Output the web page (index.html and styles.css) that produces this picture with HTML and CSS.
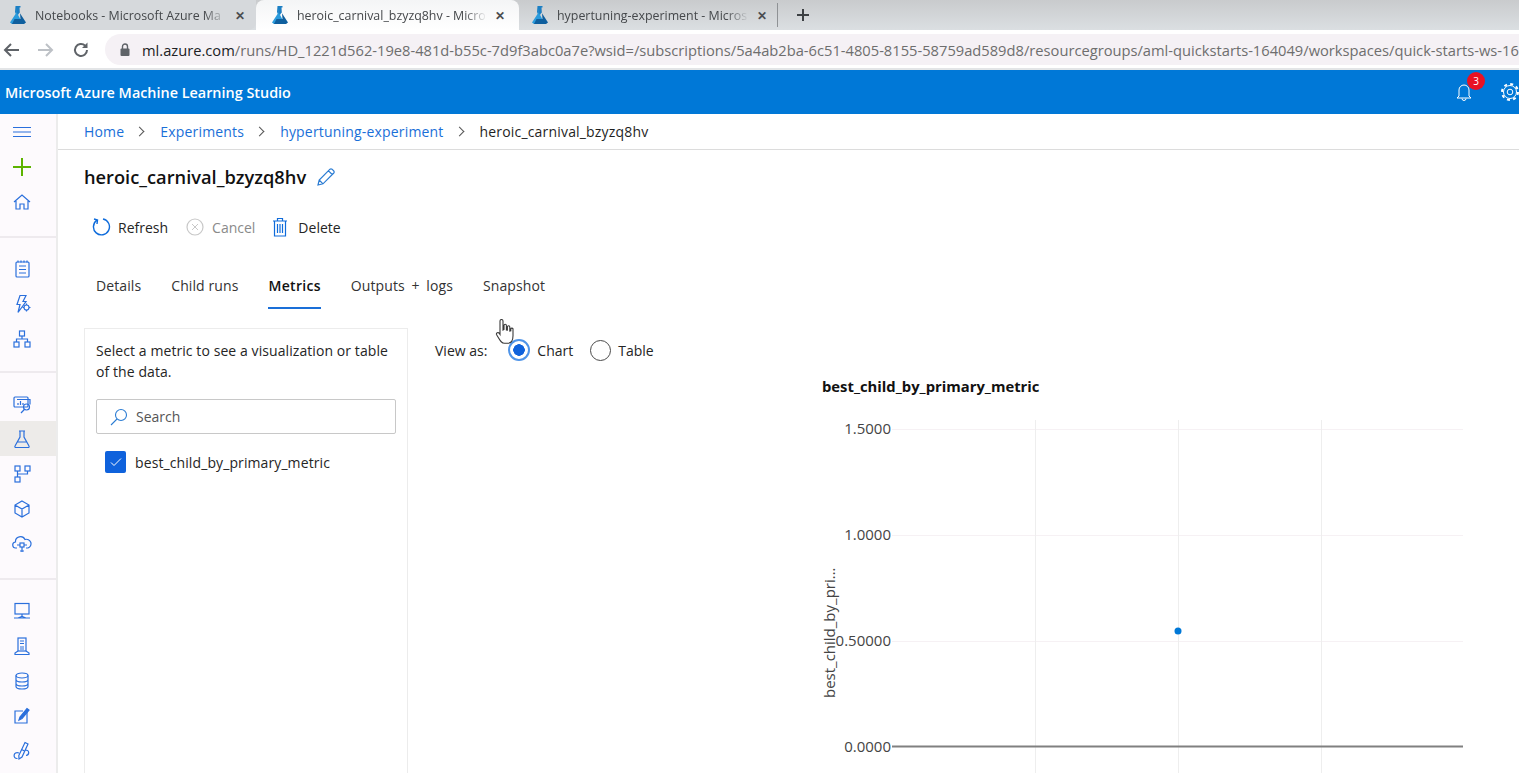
FILE: index.html
```html
<!DOCTYPE html>
<html lang="en">
<head>
    <meta charset="UTF-8">
    <meta name="viewport" content="width=device-width, initial-scale=1.0">
    <title>heroic_carnival_bzyzq8hv - Microsoft Azure Machine Learning</title>
    <link rel="stylesheet" href="styles.css">
</head>
<body>
    <svg class="sprite" width="0" height="0">
        <symbol id="flask" viewBox="0 0 18 20">
            <path d="M6.500 1h5v1.500h-1v5l-2.500 4-2-4.500z" fill="#1b7fc4"/>
            <path d="M7.500 2.500v5L1 17.500 3 19h6.500l2-4.500L8 8z" fill="#2a9bdc"/>
            <path d="M10.500 2.500v5L17 17.500 15 19H3l2.500-5h6z" fill="#0f5f9e"/>
        </symbol>
    </svg>

    <div class="tab-strip">
        <div class="browser-tab">
            <svg class="favicon"><use href="#flask"/></svg>
            <span class="tab-text">Notebooks - Microsoft Azure Ma</span>
            <span class="tab-close">✕</span>
        </div>
        <div class="browser-tab active">
            <svg class="favicon"><use href="#flask"/></svg>
            <span class="tab-text">heroic_carnival_bzyzq8hv - Micro</span>
            <span class="tab-close">✕</span>
        </div>
        <div class="browser-tab last">
            <svg class="favicon"><use href="#flask"/></svg>
            <span class="tab-text">hypertuning-experiment - Micros</span>
            <span class="tab-close">✕</span>
        </div>
        <svg class="new-tab" width="16" height="16" viewBox="0 0 16 16"><path d="M8 2v12M2 8h12" stroke="#3c4043" stroke-width="2"/></svg>
    </div>

    <div class="address-bar">
        <svg class="nav-icon" width="18" height="16" viewBox="0 0 18 16"><path d="M17 8H3M9 2L3 8l6 6" fill="none" stroke="#5f6368" stroke-width="2"/></svg>
        <svg class="nav-icon" width="18" height="16" viewBox="0 0 18 16"><path d="M1 8h14M9 2l6 6-6 6" fill="none" stroke="#bdc1c6" stroke-width="2"/></svg>
        <svg class="nav-icon" width="18" height="18" viewBox="0 0 18 18"><path d="M15 9a6 6 0 1 1-1.800-4.300" fill="none" stroke="#5f6368" stroke-width="2"/><path d="M15.500 1.500v5.500H10z" fill="#5f6368"/></svg>
        <div class="url-pill">
            <svg class="lock" width="10" height="13" viewBox="0 0 10 13"><path d="M2.500 6V3.500a2.500 2.500 0 0 1 5 0V6" fill="none" stroke="#5f6368" stroke-width="1.400"/><rect x="0.500" y="5.500" width="9" height="7.500" rx="1" fill="#5f6368"/></svg>
            <span class="url-text"><b>ml.azure.com</b>/runs/HD_1221d562-19e8-481d-b55c-7d9f3abc0a7e?wsid=/subscriptions/5a4ab2ba-6c51-4805-8155-58759ad589d8/resourcegroups/aml-quickstarts-164049/workspaces/quick-starts-ws-16</span>
        </div>
    </div>

    <header class="topbar">
        <span class="studio-name">Microsoft Azure Machine Learning Studio</span>
        <div class="bell">
            <svg width="16" height="18" viewBox="0 0 16 18"><path d="M3 13V7a5 5 0 0 1 10 0v6l2 2H1zM6 15.500a2 2 0 0 0 4 0" fill="none" stroke="#fff"/></svg>
            <span class="badge">3</span>
        </div>
        <svg class="gear" width="20" height="20" viewBox="0 0 20 20"><circle cx="10" cy="10" r="8" fill="none" stroke="#fff" stroke-width="2" stroke-dasharray="3 3.280"/><circle cx="10" cy="10" r="6.500" fill="none" stroke="#fff"/><circle cx="10" cy="10" r="2.800" fill="none" stroke="#fff"/></svg>
    </header>

    <div class="layout">
        <nav class="sidebar">
            <div class="nav-group">
                <div class="nav-item"><svg viewBox="0 0 20 20"><path d="M1 5.500h18M1 10h18M1 14.500h18"/></svg></div>
                <div class="nav-item"><svg viewBox="0 0 20 20"><path class="plus" d="M10 1v18M1 10h18"/></svg></div>
                <div class="nav-item"><svg viewBox="0 0 20 20"><path d="M2 10l8-7 8 7M4 9v8h4v-5h4v5h4V9"/></svg></div>
            </div>
            <div class="nav-group">
                <div class="nav-item"><svg viewBox="0 0 20 20"><rect x="4" y="3" width="13" height="15" rx="1"/><path d="M7 7h7M7 10.500h7M7 14h7M6 1.500v2M9 1.500v2M12 1.500v2M15 1.500v2"/></svg></div>
                <div class="nav-item"><svg viewBox="0 0 20 20"><path d="M8 1.500h6l-3 6h3l-8 11 2-8H5z"/><circle cx="14.500" cy="13.500" r="2.500"/><path d="M14.500 9.500v1.500M14.500 16v1.500M10.500 13.500H12M17 13.500h1.500"/></svg></div>
                <div class="nav-item"><svg viewBox="0 0 20 20"><rect x="7.500" y="2" width="5" height="5"/><rect x="2" y="13" width="5" height="5"/><rect x="13" y="13" width="5" height="5"/><path d="M10 7v3M4.500 13v-3h11v3"/></svg></div>
            </div>
            <div class="nav-group">
                <div class="nav-item"><svg viewBox="0 0 20 20"><rect x="2" y="3" width="14" height="10" rx="1"/><path d="M5 5.500h13v5M6 11V9M8.500 11V7M11 11V9"/><circle cx="14.500" cy="13" r="3"/><path d="M12.300 15.500L9 19"/></svg></div>
                <div class="nav-item active"><svg viewBox="0 0 20 20"><path d="M7 2h6M8 2v6L3 17a1 1 0 0 0 1 1.500h12a1 1 0 0 0 1-1.500L12 8V2M5.500 13h9"/></svg></div>
                <div class="nav-item"><svg viewBox="0 0 20 20"><rect x="3" y="2" width="5" height="5"/><rect x="13" y="2" width="5" height="5"/><rect x="3" y="13" width="5" height="5"/><path d="M5.500 7v6M15.500 7v3h-10"/></svg></div>
                <div class="nav-item"><svg viewBox="0 0 20 20"><path d="M10 2l7 4v8l-7 4-7-4V6zM3 6l7 4 7-4M10 10v8"/></svg></div>
                <div class="nav-item"><svg viewBox="0 0 20 20"><path d="M5 14H4a3 3 0 0 1-.5-6A5 5 0 0 1 13 5.500 4 4 0 0 1 16 14h-2"/><rect x="8" y="9" width="4" height="4"/><path d="M5 11h3M12 11h3M10 13v5M8 17h4"/></svg></div>
            </div>
            <div class="nav-group">
                <div class="nav-item"><svg viewBox="0 0 20 20"><rect x="3" y="2.500" width="14" height="10.500"/><path d="M10 13v3M2 17h16M6 17l4-1.500 4 1.500"/></svg></div>
                <div class="nav-item"><svg viewBox="0 0 20 20"><rect x="6" y="2" width="8" height="13"/><path d="M8 5h4M8 7.500h4M8 11h4M8 13h4M6 15l-3 2v1.500h14V17l-3-2"/></svg></div>
                <div class="nav-item"><svg viewBox="0 0 20 20"><ellipse cx="10" cy="4.500" rx="6" ry="2.500"/><path d="M4 4.500v11c0 1.400 2.700 2.500 6 2.500s6-1.100 6-2.500v-11M4 8.500c0 1.400 2.700 2.500 6 2.500s6-1.100 6-2.500M4 12.500c0 1.400 2.700 2.500 6 2.500s6-1.100 6-2.500"/></svg></div>
                <div class="nav-item"><svg viewBox="0 0 20 20"><path d="M15 5v12H3V5h8"/><path class="solid" d="M7 14l1-3 7-8.500 2 1.500-7 8.500z"/></svg></div>
                <div class="nav-item"><svg viewBox="0 0 20 20"><path d="M13 1.500l3 1.500-6 13-3 2-.2-3.500z"/><path d="M9.500 8.500l3 1.500M7 12c-6-2-6.500 6-1.500 5.500M13 9c5 0 4.500 5 1 5.500"/></svg></div>
            </div>
        </nav>

        <main class="main">
            <div class="breadcrumb">
                <a href="#">Home</a>
                <span class="crumb-sep"></span>
                <a href="#">Experiments</a>
                <span class="crumb-sep"></span>
                <a href="#">hypertuning-experiment</a>
                <span class="crumb-sep"></span>
                <span class="crumb-current">heroic_carnival_bzyzq8hv</span>
            </div>

            <div class="content">
                <div class="run-title">
                    <h1>heroic_carnival_bzyzq8hv</h1>
                    <svg width="20" height="20" viewBox="0 0 20 20"><path d="M2 18l1.200-5L14 2.200a1.500 1.500 0 0 1 2 0l1.800 1.800a1.500 1.500 0 0 1 0 2L7 16.800zM3.200 13L7 16.800M12.500 3.800l3.700 3.700" fill="none" stroke="#2b7cd3" stroke-width="1.200"/></svg>
                </div>

                <div class="commands">
                    <div class="command">
                        <svg width="20" height="20" viewBox="0 0 20 20"><path d="M6 3.200A8 8 0 1 0 12 2" fill="none" stroke="#0f6cdb" stroke-width="1.400"/><path d="M3 2l3.500 1 -.5 4" fill="none" stroke="#0f6cdb" stroke-width="1.400"/></svg>
                        <span>Refresh</span>
                    </div>
                    <div class="command disabled">
                        <svg width="20" height="20" viewBox="0 0 20 20"><circle cx="10" cy="10" r="8" fill="none" stroke="#c8c8c8" stroke-width="1.200"/><path d="M7 7l6 6M13 7l-6 6" stroke="#c8c8c8"/></svg>
                        <span>Cancel</span>
                    </div>
                    <div class="command">
                        <svg width="19" height="20" viewBox="0 0 19 20"><path d="M1 4h14M5.500 4V1.500h5V4M2.500 4v15h11V4" fill="none" stroke="#0f6cdb" stroke-width="1.200"/><path d="M5.500 7v9M8 7v9M10.500 7v9" stroke="#0f6cdb" stroke-width="1.200"/></svg>
                        <span>Delete</span>
                    </div>
                </div>

                <div class="page-tabs">
                    <a href="#">Details</a>
                    <a href="#">Child runs</a>
                    <a href="#" class="active">Metrics</a>
                    <a href="#" class="wide-words">Outputs + logs</a>
                    <a href="#">Snapshot</a>
                </div>

                <div class="metrics">
                    <aside class="metric-panel">
                        <p>Select a metric to see a visualization or table of the data.</p>
                        <div class="search-box">
                            <svg width="18" height="18" viewBox="0 0 18 18"><circle cx="11" cy="7" r="5.500" fill="none" stroke="#2b7cd3" stroke-width="1.100"/><path d="M7 11l-6 6" stroke="#2b7cd3" stroke-width="1.100"/></svg>
                            <span>Search</span>
                        </div>
                        <div class="metric-option">
                            <span class="checkbox"><svg width="14" height="14" viewBox="0 0 14 14"><path d="M2 7.500l3 3 7-7" fill="none" stroke="#fff"/></svg></span>
                            <span>best_child_by_primary_metric</span>
                        </div>
                    </aside>

                    <section class="chart-pane">
                        <div class="view-as">
                            <span class="view-label">View as:</span>
                            <span class="radio checked"></span>
                            <span class="radio-label">Chart</span>
                            <span class="radio"></span>
                            <span class="radio-label">Table</span>
                        </div>
                        <svg class="chart" width="660" height="400" viewBox="0 0 660 400">
                            <text class="chart-title" x="2" y="15">best_child_by_primary_metric</text>
                            <g class="grid">
                                <path d="M72 52.500h571M72 158.500h571M72 264.500h571"/>
                                <path class="grid-v" d="M215.500 43v357M358.500 43v357M501.500 43v357"/>
                            </g>
                            <path d="M72 369.500h571" stroke="#808080" stroke-width="2"/>
                            <g class="tick-labels">
                                <text x="71" y="57">1.5000</text>
                                <text x="71" y="163">1.0000</text>
                                <text x="71" y="269">0.50000</text>
                                <text x="71" y="375">0.0000</text>
                            </g>
                            <text class="axis-title" transform="translate(15 321) rotate(-90)">best_child_by_pri...</text>
                            <circle cx="358" cy="254" r="3.500" fill="#0078d7"/>
                        </svg>
                    </section>
                </div>
            </div>
        </main>
    </div>

    <svg class="cursor" width="20" height="27" viewBox="0 0 20 27"><path d="M5 2a1.500 1.500 0 0 1 3 0v9l1-.5V6.500a1.200 1.200 0 0 1 2.400 0V11l1 .2V8a1.200 1.200 0 0 1 2.400 0v4l1-.2v-2a1.200 1.200 0 0 1 2.200 0v7c0 5-2.500 7.500-5.500 7.500h-3C6 24.300 5 21 1.500 15.500 1 14 3 13 4 14l1 1.500z" fill="#fff" stroke="#3a3a3a" stroke-width="1.100"/></svg>
</body>
</html>
```

FILE: styles.css
```css
* {
    margin: 0;
    padding: 0;
    box-sizing: border-box;
}

:root {
    --azure-blue: #0078d7;
    --link-blue: #1a6fd8;
    --icon-blue: #2a6fdc;
    --text-color: #252525;
    --border-color: #ececec;
}

html, body {
    height: 100%;
    overflow: hidden;
}

body {
    display: flex;
    flex-direction: column;
    background: #fff;
    color: var(--text-color);
    font-family: "Open Sans", "Noto Sans", sans-serif;
    font-size: 14px;
}

a {
    text-decoration: none;
    color: inherit;
}

.sprite {
    position: absolute;
}

/* browser chrome */
.tab-strip {
    display: flex;
    align-items: center;
    flex: none;
    height: 30px;
    background: linear-gradient(#c9cbcd, #dbdfe2);
}

.browser-tab {
    display: flex;
    align-items: center;
    width: 259px;
    height: 30px;
    padding: 0 7px 0 9px;
    background: #d6d9dc;
    border-radius: 0 0 8px 0;
}

.browser-tab:first-child {
    width: 256px;
}

.browser-tab.active {
    width: 263px;
    padding: 0 10px 0 15px;
    background: linear-gradient(#f4f5f6, #fff);
    border-radius: 8px 8px 0 0;
}

.browser-tab.last {
    height: 24px;
    padding: 0 6px 0 12px;
    background: none;
    border-right: 1px solid #8f9295;
    border-radius: 0;
}

.favicon {
    flex: none;
    width: 18px;
    height: 20px;
    margin-right: 8px;
}

.tab-text {
    flex: 1;
    min-width: 0;
    overflow: hidden;
    white-space: nowrap;
    font-size: 12.4px;
    color: #45484b;
    -webkit-mask-image: linear-gradient(to right, #000 88%, transparent 100%);
    mask-image: linear-gradient(to right, #000 88%, transparent 100%);
}

.tab-close {
    flex: none;
    width: 18px;
    margin-left: 4px;
    font-size: 12px;
    font-weight: 700;
    text-align: center;
    color: #4a4d50;
}

.new-tab {
    margin-left: 17px;
}

.address-bar {
    display: flex;
    align-items: center;
    flex: none;
    height: 40px;
    padding: 4px 0 3px 2px;
    background: #fff;
    border-bottom: 2px solid #e3e5e7;
}

.nav-icon {
    flex: none;
    margin-right: 17px;
}

.url-pill {
    display: flex;
    align-items: center;
    gap: 12px;
    flex: 1;
    min-width: 0;
    height: 31px;
    margin-left: -2px;
    padding-left: 15px;
    background: #f5f1f5;
    border-radius: 16px 0 0 16px;
    overflow: hidden;
}

.lock {
    flex: none;
}

.url-text {
    white-space: nowrap;
    font-size: 14.7px;
    color: #6e6e6e;
}

.url-text b {
    font-weight: 400;
    color: #202124;
}

.topbar {
    display: flex;
    align-items: center;
    flex: none;
    height: 44px;
    padding-left: 5px;
    background: var(--azure-blue);
    color: #fff;
    overflow: hidden;
}

.studio-name {
    flex: 1;
    font-size: 14.4px;
    font-weight: 600;
    padding-top: 1px;
}

.bell {
    position: relative;
    display: flex;
    margin-right: 28px;
}

.badge {
    position: absolute;
    top: -11px;
    left: 11px;
    width: 18px;
    height: 18px;
    border-radius: 50%;
    background: #e81123;
    font-size: 10px;
    line-height: 18px;
    text-align: center;
}

.gear {
    flex: none;
    margin-right: -1px;
}

/* page */
.layout {
    display: flex;
    flex: 1;
    min-height: 0;
}

.sidebar {
    flex: none;
    width: 58px;
    background: #fdfafd;
    border-right: 2px solid #ececec;
}

.nav-group {
    padding: 13px 0 15px;
    border-bottom: 2px solid #eeeaee;
}

.nav-group:first-child {
    padding: 0 0 17px;
}

.nav-group:nth-child(3) {
    padding-bottom: 17px;
}

.nav-group:last-child {
    border-bottom: none;
}

.nav-item {
    display: flex;
    align-items: center;
    justify-content: center;
    height: 35px;
    padding-right: 12px;
}

.nav-item.active {
    background: #edebe9;
}

.nav-item svg {
    width: 20px;
    height: 20px;
    fill: none;
    stroke: var(--icon-blue);
    stroke-width: 1.200;
}

.nav-item .plus {
    stroke: #5db300;
    stroke-width: 2;
}

.nav-item .solid {
    fill: var(--icon-blue);
}

.main {
    flex: 1;
    min-width: 0;
}

.breadcrumb {
    display: flex;
    align-items: center;
    height: 36px;
    padding-left: 26px;
    border-bottom: 1px solid #dcdcdc;
    letter-spacing: .18px;
}

.breadcrumb a {
    color: var(--link-blue);
}

.crumb-sep {
    width: 7px;
    height: 7px;
    margin: 0 17px 0 12px;
    border-top: 1px solid #555;
    border-right: 1px solid #555;
    transform: rotate(45deg);
}

.crumb-current {
    color: #1f1f1f;
}

.content {
    padding: 0 0 0 26px;
}

.run-title {
    display: flex;
    align-items: center;
    gap: 10px;
    height: 52px;
    padding-top: 1px;
}

.run-title h1 {
    font-size: 18.25px;
    font-weight: 600;
    color: #111;
}

.commands {
    display: flex;
    align-items: center;
    gap: 17px;
    height: 48px;
    margin-top: 1px;
    padding-left: 7px;
}

.command {
    display: flex;
    align-items: center;
    gap: 7px;
}

.command.disabled {
    color: #8a8a8a;
}

.page-tabs {
    display: flex;
    gap: 30px;
    height: 45px;
    margin-top: 13px;
    padding: 0 0 0 12px;
    letter-spacing: .1px;
}

.page-tabs a {
    display: flex;
    align-items: center;
    height: 45px;
    color: #333;
    border-bottom: 2px solid transparent;
    white-space: pre;
}

.page-tabs a.active {
    font-weight: 600;
    letter-spacing: .3px;
    color: #111;
    border-bottom-color: var(--link-blue);
}

.page-tabs a.wide-words {
    word-spacing: 3px;
}

.metrics {
    display: flex;
    margin-top: 19px;
}

.metric-panel {
    flex: none;
    width: 324px;
    height: 460px;
    padding: 11px 11px;
    border: 1px solid var(--border-color);
}

.metric-panel p {
    line-height: 21px;
    letter-spacing: .08px;
}

.search-box {
    display: flex;
    align-items: center;
    gap: 8px;
    height: 35px;
    margin-top: 17px;
    padding-left: 13px;
    border: 1px solid #c8c8c8;
    border-radius: 2px;
    color: #555;
}

.metric-option {
    display: flex;
    align-items: center;
    gap: 9px;
    margin-top: 17px;
    padding-left: 9px;
    letter-spacing: .1px;
}

.checkbox {
    display: flex;
    align-items: center;
    justify-content: center;
    width: 21px;
    height: 22px;
    border-radius: 2px;
    background: #0f62dc;
}

.chart-pane {
    flex: 1;
    min-width: 0;
}

.view-as {
    display: flex;
    align-items: center;
    height: 22px;
    margin: 11px 0 0 27px;
}

.view-label {
    margin-right: 21px;
}

.radio {
    flex: none;
    width: 21px;
    height: 21px;
    margin-right: 7px;
    border: 1px solid #4a4a4a;
    border-radius: 50%;
}

.radio.checked {
    width: 22px;
    height: 22px;
    border: 2px solid #4f94e8;
    background: radial-gradient(circle, #0f62dc 0 5.500px, transparent 6px);
}

.radio-label {
    margin-right: 17px;
}

.chart {
    display: block;
    margin: 16px 0 0 412px;
}

.chart-title {
    font-size: 14.8px;
    font-weight: 700;
    fill: #111;
}

.grid path {
    stroke: #f6f1f4;
    fill: none;
}

.grid .grid-v {
    stroke: #eeeeee;
}

.tick-labels text {
    text-anchor: end;
    font-size: 15px;
    fill: #444;
}

.axis-title {
    font-size: 15px;
    fill: #444;
}

.cursor {
    position: absolute;
    left: 495px;
    top: 319px;
}
```
